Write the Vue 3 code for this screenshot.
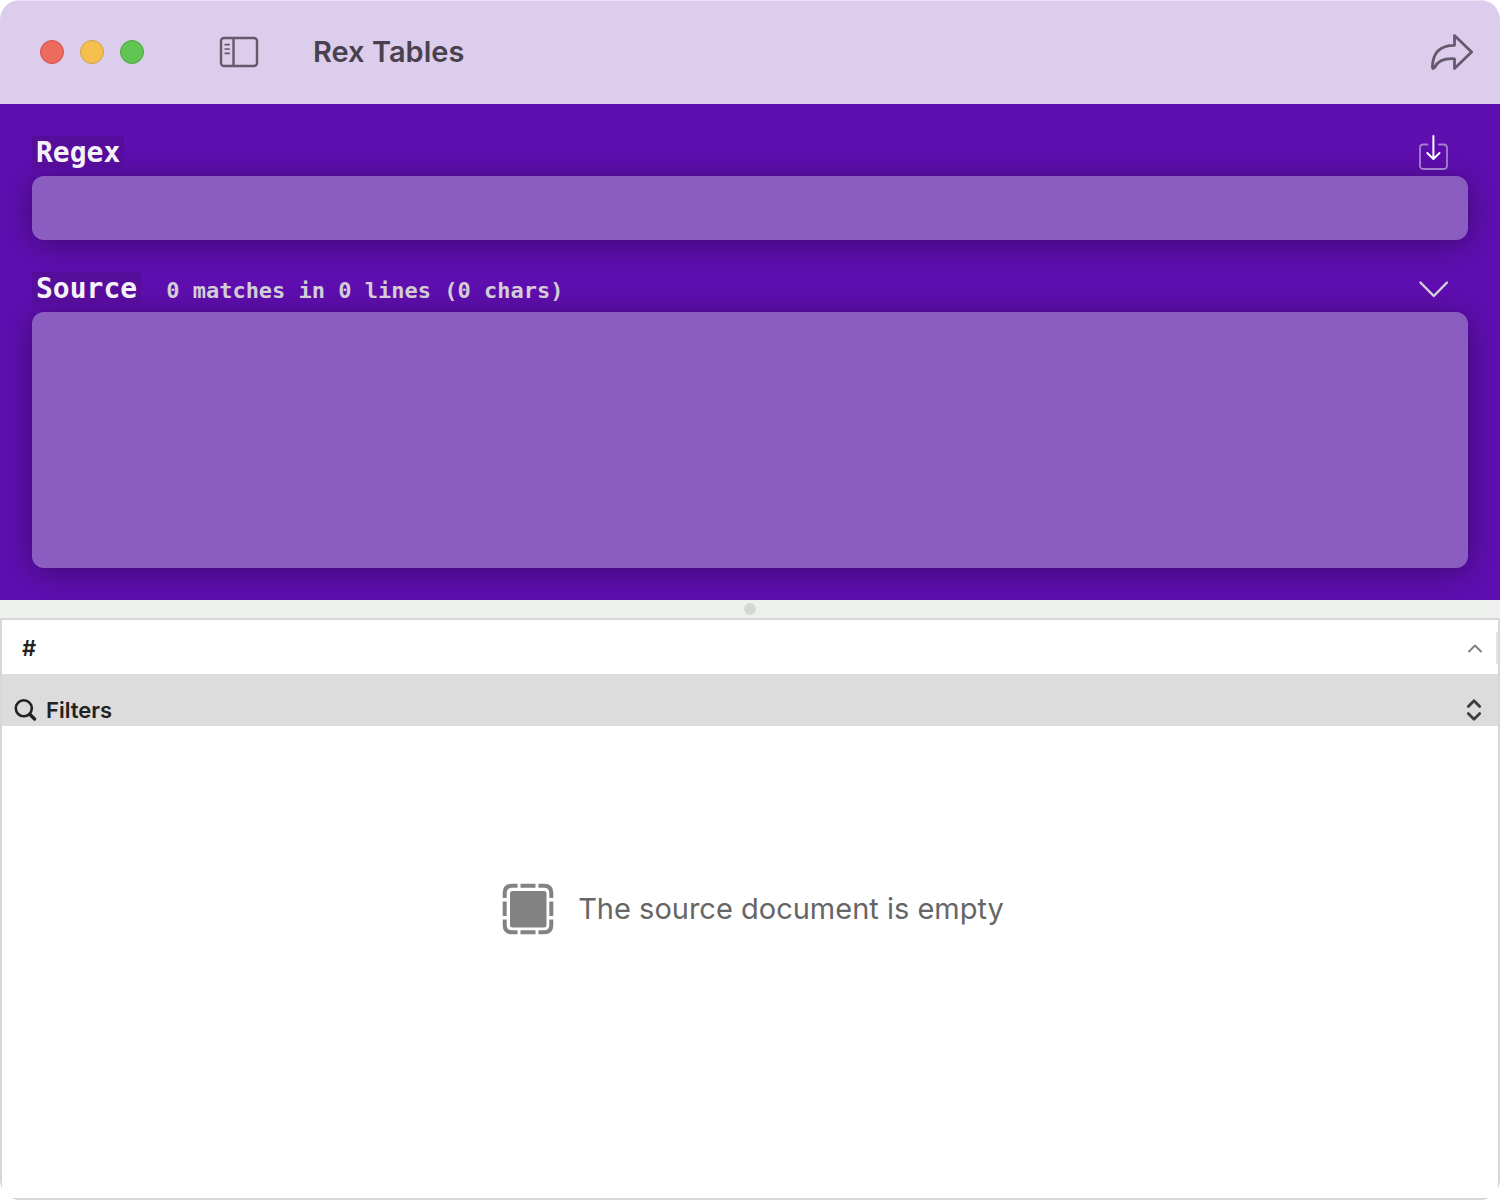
<script setup>
import { ref, computed } from 'vue'

const regex = ref('')
const source = ref('')

const status = computed(() => {
  const text = source.value
  const lines = text ? text.split('\n').length : 0
  let matches = 0
  if (text && regex.value) {
    try {
      matches = [...text.matchAll(new RegExp(regex.value, 'gm'))].length
    } catch {
      matches = 0
    }
  }
  return `${matches} matches in ${lines} lines (${text.length} chars)`
})
</script>

<template>
  <div class="window">
    <header class="titlebar">
      <div class="lights">
        <button class="light close" aria-label="Close"></button>
        <button class="light minimize" aria-label="Minimize"></button>
        <button class="light zoom" aria-label="Zoom"></button>
      </div>
      <button class="icon sidebar-toggle" aria-label="Toggle sidebar">
        <svg width="40" height="32" viewBox="0 0 40 32" fill="none" stroke="#655a6c" stroke-linecap="round">
          <rect x="2" y="2" width="36" height="28" rx="3" stroke-width="2.4" />
          <path d="M14.5 2v28" stroke-width="2.4" stroke-linecap="butt" />
          <path d="M6.2 8.7h4M6.2 13h4M6.2 17.3h4" stroke-width="1.7" />
        </svg>
      </button>
      <h1>Rex Tables</h1>
      <button class="icon share" aria-label="Share">
        <svg width="44" height="40" viewBox="0 0 44 40" fill="none" stroke="#655a6c" stroke-width="2.8" stroke-linejoin="round">
          <path d="M25.500 3.600L42.600 20L25.500 36.400V26.800C16 26.200 9 28.500 5.600 35.300Q3.400 38 3.400 35C3.700 21 11 13.300 25.500 13.300Z" />
        </svg>
      </button>
    </header>

    <main>
      <section class="editor">
        <div class="row">
          <label for="regex">Regex</label>
          <button class="icon" aria-label="Import">
            <svg width="32" height="36" viewBox="0 0 32 36" fill="none" stroke-linecap="round" stroke-linejoin="round">
              <path d="M10.500 10.500H6.500Q3 10.500 3 14V31.500Q3 35 6.500 35H26.500Q30 35 30 31.500V14Q30 10.500 26.500 10.500H22" stroke="#a57fd0" stroke-width="1.800" />
              <path d="M16.400 2V24.500M10.300 19L16.400 25L22.500 19" stroke="#fff" stroke-width="2" />
            </svg>
          </button>
        </div>
        <input id="regex" v-model="regex" class="field" type="text" spellcheck="false" />
        <div class="row">
          <label for="source">Source</label>
          <span class="status">{{ status }}</span>
          <button class="icon" aria-label="Collapse source">
            <svg width="32" height="32" viewBox="0 0 32 32" fill="none" stroke="#d8d2da" stroke-width="2.400" stroke-linecap="round" stroke-linejoin="round">
              <path d="M3.400 10.500L16.800 24L30 10.500" />
            </svg>
          </button>
        </div>
        <textarea id="source" v-model="source" class="field source" spellcheck="false"></textarea>
      </section>

      <div class="splitter"><span class="grip"></span></div>

      <section class="results">
        <table>
          <thead>
            <tr>
              <th scope="col">
                <div class="column">
                  <span>#</span>
                  <svg width="16" height="10" viewBox="0 0 16 10" fill="none" stroke="#808080" stroke-width="2" stroke-linecap="round" stroke-linejoin="round">
                    <path d="M2 8.500L8 2.500L14 8.500" />
                  </svg>
                  <i class="resizer"></i>
                </div>
              </th>
            </tr>
          </thead>
        </table>
        <button class="filters">
          <svg width="24" height="24" viewBox="0 0 24 24" fill="none" stroke="#222" stroke-linecap="round">
            <circle cx="9.800" cy="10.300" r="8" stroke-width="2.600" />
            <path d="M16.200 16.700L20.600 21" stroke-width="3.400" />
          </svg>
          <span>Filters</span>
          <svg class="expand" width="16" height="24" viewBox="0 0 16 24" fill="none" stroke="#3c3c3c" stroke-width="2.800" stroke-linecap="round" stroke-linejoin="round">
            <path d="M2.300 8.500L8 2.800L13.700 8.500M2.300 15.500L8 21.200L13.700 15.500" />
          </svg>
        </button>
        <div class="empty">
          <svg width="52" height="52" viewBox="0 0 52 52" fill="none" stroke="#828282" stroke-width="4">
            <rect x="8" y="8" width="36.500" height="36.500" rx="2.500" fill="#828282" stroke="none" />
            <path d="M2.700 15V10Q2.700 2.700 10 2.700H15.500M18.500 2.700H33.500M36.500 2.700H42Q49.300 2.700 49.300 10V15M49.300 18.500V33M49.300 36.500V42Q49.300 49.300 42 49.300H36.500M33.500 49.300H18.500M15.500 49.300H10Q2.700 49.300 2.700 42V36.500M2.700 33V18.500" />
          </svg>
          <p>The source document is empty</p>
        </div>
      </section>
    </main>
  </div>
</template>

<style>
body {
  background: #fff;
}
</style>

<style scoped>
* {
  box-sizing: border-box;
}

.window {
  display: flex;
  flex-direction: column;
  min-height: 100vh;
  overflow: hidden;
  border-radius: 20px;
  font-family: Inter, "Liberation Sans", sans-serif;
  background: #fff;
}

button {
  padding: 0;
  border: 0;
  background: none;
  font: inherit;
}

svg {
  display: block;
  flex: none;
}

.titlebar {
  display: flex;
  align-items: center;
  height: 104px;
  padding: 0 27px 1px 40px;
  border-top: 1px solid #eadff3;
  background: #dccdec;
}

.lights {
  display: flex;
  gap: 16px;
}

.light {
  width: 24px;
  height: 24px;
  border: 1px solid #d4504a;
  border-radius: 50%;
  background: #ec6a5e;
}

.minimize {
  border-color: #d6a243;
  background: #f4bf4f;
}

.zoom {
  border-color: #4fa73f;
  background: #61c554;
}

.sidebar-toggle {
  margin-left: 75px;
}

h1 {
  margin: 0 0 0 54px;
  font-size: 29px;
  line-height: 40px;
  font-weight: 600;
  color: #49424e;
}

.share {
  margin-left: auto;
}

main {
  display: flex;
  flex: 1;
  flex-direction: column;
}

.editor {
  display: flex;
  flex-direction: column;
  gap: 8px;
  padding: 32px;
  background: #5f0eb0;
}

.row {
  display: flex;
  align-items: center;
  height: 32px;
  padding-right: 19px;
  font-family: "DejaVu Sans Mono", monospace;
  font-weight: 700;
}

.row label {
  height: 32px;
  padding: 0 4px;
  font-size: 28px;
  line-height: 34px;
  color: #f4f2f6;
  background: #560d9c;
}

.row .icon {
  margin-left: auto;
}

.status {
  margin-left: 25px;
  padding-top: 5px;
  font-size: 22px;
  line-height: 32px;
  color: #d3ced6;
}

.field {
  display: block;
  width: 100%;
  height: 64px;
  margin: 0;
  padding: 12px 16px;
  border: 0;
  border-radius: 12px;
  outline: 0;
  font: 28px "DejaVu Sans Mono", monospace;
  color: #fff;
  background: #8b5dc1;
  box-shadow: 0 4px 32px rgba(0, 0, 0, 0.36);
}

.field + .row {
  margin-top: 24px;
}

.row label,
.row .status,
.row .icon {
  position: relative;
}

.source {
  height: 256px;
  resize: none;
}

.splitter {
  display: flex;
  align-items: center;
  justify-content: center;
  height: 18px;
  position: relative;
  background: #edf0ec;
}

.grip {
  width: 12px;
  height: 12px;
  border-radius: 50%;
  background: #d5d7d5;
}

.results {
  display: flex;
  flex: 1;
  flex-direction: column;
  position: relative;
  border: 2px solid #d6d8d6;
  background: #fff;
}

table {
  width: 100%;
  border-collapse: collapse;
}

th {
  padding: 0;
  font-size: 22px;
  font-weight: 600;
  text-align: left;
  color: #222;
}

.column {
  display: flex;
  align-items: center;
  height: 54px;
  padding: 2px 0 0 20px;
}

.column svg {
  margin-left: auto;
}

.resizer {
  width: 2px;
  height: 32px;
  margin-left: 13px;
  background: #e4e4e4;
}

.filters {
  display: flex;
  align-items: center;
  height: 52px;
  padding: 20px 16px 0 12px;
  font-size: 22px;
  line-height: 28px;
  font-weight: 600;
  color: #222;
  background: #dcdcdc;
}

.filters span {
  margin-left: 8px;
}

.expand {
  margin-left: auto;
}

.empty {
  display: flex;
  flex: 1;
  align-items: flex-start;
  justify-content: center;
  gap: 24px;
  padding: 157px 0 40px 6px;
  color: #666;
}

.empty p {
  margin: 0;
  font-size: 29px;
  line-height: 52px;
}
</style>
